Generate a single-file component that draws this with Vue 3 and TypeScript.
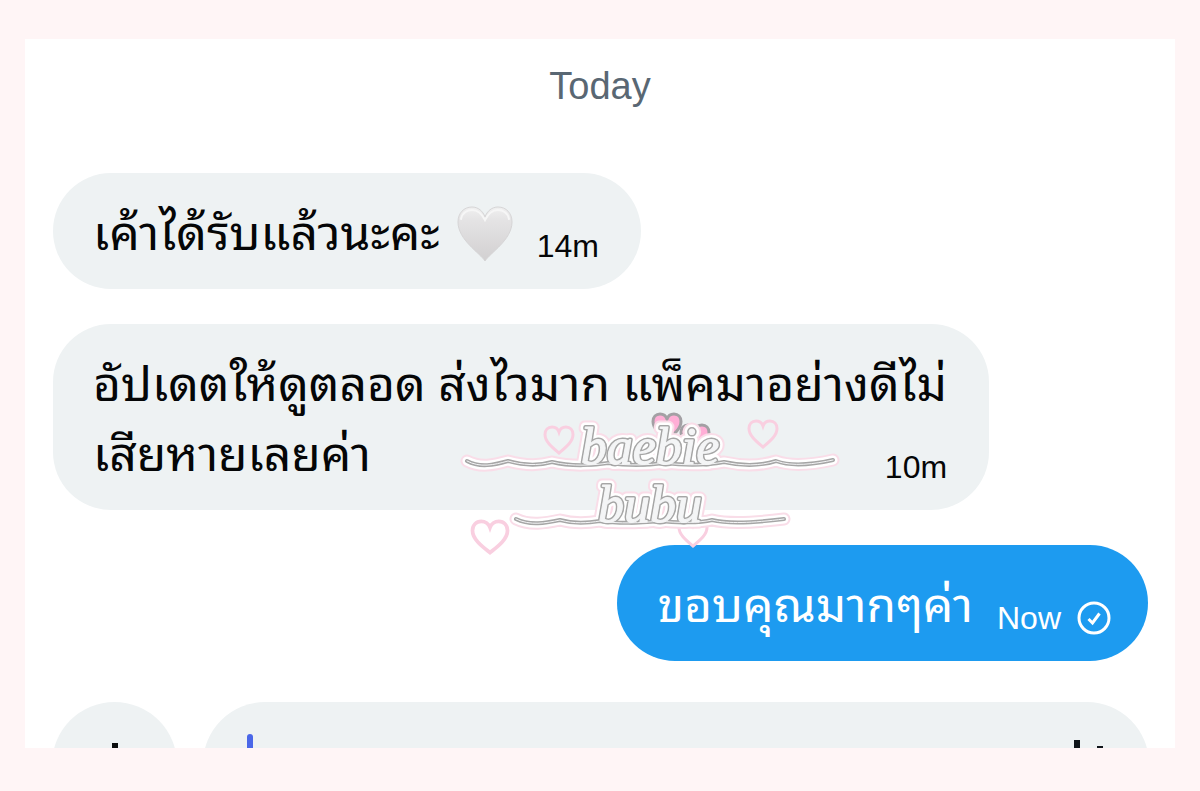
<script setup lang="ts">
interface Message {
  id: number
  side: 'in' | 'out'
  lines: string[]
  time: string
  heart?: boolean
}

const messages: Message[] = [
  { id: 1, side: 'in', lines: ['เค้าได้รับแล้วนะคะ'], time: '14m', heart: true },
  { id: 2, side: 'in', lines: ['อัปเดตให้ดูตลอด ส่งไวมาก แพ็คมาอย่างดีไม่', 'เสียหายเลยค่า'], time: '10m' },
  { id: 3, side: 'out', lines: ['ขอบคุณมากๆค่า'], time: 'Now' },
]

const heartPath = 'M16 28C10 23 2 17 2 9.500C2 5 5 2 9 2C12 2 15 4 16 7C17 4 20 2 23 2C27 2 30 5 30 9.500C30 17 22 23 16 28Z'
</script>

<template>
  <div class="page">
    <main class="card">
      <h1 class="day">Today</h1>

      <section class="thread">
        <article
          v-for="m in messages"
          :key="m.id"
          class="bubble"
          :class="[m.side, { tall: m.lines.length > 1 }]"
        >
          <p class="text">
            <span v-for="line in m.lines" :key="line" class="line">{{ line }}</span>
          </p>
          <svg v-if="m.heart" class="emoji" viewBox="0 0 56 56" role="img" aria-label="white heart">
            <defs>
              <linearGradient id="heartFill" x1="0" y1="0" x2="0" y2="1">
                <stop offset="0" stop-color="#f0f0f0" />
                <stop offset="0.25" stop-color="#e4e3e4" />
                <stop offset="1" stop-color="#d2d0d1" />
              </linearGradient>
            </defs>
            <path
              d="M28 55C23 47 1 34 1 16C1 7 7 1 15 1C21 1 26 5 28 11C30 5 35 1 41 1C49 1 55 7 55 16C55 34 33 47 28 55Z"
              fill="url(#heartFill)" stroke="#d6d5d6" stroke-width="1"
            />
            <path d="M4 13C5 7 10 4 15 4C21 4 25 8 28 14C31 8 35 4 41 4C46 4 51 7 52 13" fill="none" stroke="#f6f6f6" stroke-width="2" stroke-linecap="round" />
          </svg>
          <span class="meta">
            <time>{{ m.time }}</time>
            <svg v-if="m.side === 'out'" class="sent" viewBox="0 0 34 34" role="img" aria-label="sent">
              <circle cx="17" cy="17" r="15" fill="none" stroke="currentColor" stroke-width="3" />
              <path d="M11.500 18L15.500 22L22.500 12.500" fill="none" stroke="currentColor" stroke-width="3" />
            </svg>
          </span>
        </article>
      </section>

      <form class="composer" @submit.prevent>
        <button class="round" type="button" aria-label="Add attachment">
          <svg viewBox="0 0 44 44"><path d="M22 0V44M0 22H44" stroke="#0b0d0e" stroke-width="6" /></svg>
        </button>
        <div class="field">
          <i class="caret"></i>
          <input type="text" aria-label="Message" />
          <button class="voice" type="button" aria-label="Record voice message">
            <svg viewBox="0 0 56 50">
              <path d="M28 0V50M51 6V44M5 12V38" stroke="#0f1419" stroke-width="6" />
            </svg>
          </button>
        </div>
      </form>

      <svg class="mark" viewBox="455 405 390 155">
        <defs>
          <g id="script">
            <path class="swash" d="M467 461C480 468 494 465 508 461C522 465 538 466 552 462C572 467 596 465 608 463C630 466 650 465 664 463C690 466 708 465 724 462C742 466 760 466 776 461C792 467 815 464 833 460" />
            <path class="swash" d="M516 519C530 526 546 523 560 520C574 524 588 523 600 521C620 524 640 523 660 521C676 523 700 523 712 520C728 524 752 523 784 519" />
            <text x="650" y="464" text-anchor="middle">baebie</text>
            <text x="650" y="522" text-anchor="middle">bubu</text>
          </g>
        </defs>
        <g class="outline">
          <path :d="heartPath" transform="translate(543 425)" />
          <path :d="heartPath" transform="translate(747 419)" />
          <path :d="heartPath" transform="translate(470 519) scale(1.25 1.200)" />
          <path :d="heartPath" transform="translate(677 518)" />
        </g>
        <g class="solid">
          <path :d="heartPath" transform="translate(651 412)" />
          <path :d="heartPath" transform="translate(679 423)" />
        </g>
        <use href="#script" class="glow" />
        <use href="#script" class="halo" />
        <use href="#script" class="edge" />
        <use href="#script" class="core" />
      </svg>
    </main>
  </div>
</template>

<style>
body {
  margin: 0;
}
</style>

<style scoped>
.page {
  box-sizing: border-box;
  height: 100vh;
  padding: 39px 25px 43px;
  display: flex;
  background: #fff5f6;
  font-family: "Liberation Sans", Arial, sans-serif;
}
.card {
  position: relative;
  flex: 1;
  min-width: 0;
  overflow: hidden;
  background: #fff;
  display: flex;
  flex-direction: column;
}
.day {
  margin: 0;
  padding: 23px 0 63px;
  font-size: 38px;
  line-height: 48px;
  font-weight: 400;
  text-align: center;
  color: #596773;
}
.thread {
  display: flex;
  flex-direction: column;
  align-items: flex-start;
  gap: 35px;
  padding: 0 27px 0 28px;
}
.bubble {
  box-sizing: border-box;
  display: flex;
  padding: 21px 42px 25px 40px;
  border-radius: 58px;
  background: #eef2f3;
  color: #050607;
}
.bubble.tall {
  display: grid;
}
.bubble.out {
  align-self: flex-end;
  padding-right: 37px;
  background: #1d9bf0;
  color: #fff;
}
.text {
  margin: 0;
  font-family: "Noto Sans Thai Looped", "Noto Looped Thai", Loma, Garuda, Waree, "Liberation Sans", sans-serif;
  font-size: 48px;
  line-height: 70px;
  white-space: nowrap;
}
.line {
  display: block;
}
.emoji {
  width: 56px;
  height: 56px;
  margin: 12px 0 0 17px;
}
.meta {
  align-self: flex-end;
  display: flex;
  align-items: center;
  gap: 16px;
  margin-left: 24px;
  font-size: 32px;
  line-height: 36px;
}
.tall .meta {
  grid-area: 1 / 1;
  justify-self: end;
}
.tall .text {
  grid-area: 1 / 1;
}
.sent {
  width: 34px;
  height: 34px;
}
.composer {
  display: flex;
  align-items: flex-start;
  gap: 26px;
  padding: 41px 26px 0 27px;
}
.round {
  flex: none;
  width: 125px;
  height: 125px;
  border: 0;
  border-radius: 50%;
  padding: 0;
  display: grid;
  place-items: center;
  background: #eef2f3;
}
.round svg {
  width: 44px;
  height: 44px;
}
.field {
  flex: 1;
  min-width: 0;
  box-sizing: border-box;
  height: 125px;
  border-radius: 62px;
  padding: 0 44px;
  display: flex;
  align-items: center;
  background: #eef2f3;
}
.caret {
  width: 6px;
  height: 62px;
  border-radius: 3px;
  background: #4a67e8;
}
.field input {
  flex: 1;
  min-width: 0;
  border: 0;
  outline: 0;
  background: transparent;
  font: inherit;
  font-size: 48px;
}
.voice {
  border: 0;
  padding: 0;
  background: transparent;
}
.voice svg {
  display: block;
  width: 56px;
  height: 50px;
}
.mark {
  position: absolute;
  top: 366px;
  left: calc(50% - 145px);
  width: 390px;
  height: 155px;
  pointer-events: none;
  font-family: "Liberation Serif", serif;
  font-style: italic;
  font-size: 52px;
}
.outline {
  fill: none;
  stroke: #f9cfe0;
  stroke-width: 3;
}
.solid {
  fill: #ffaed6;
  stroke: #a3a0a4;
  stroke-width: 3;
}
.swash {
  fill: none;
}
.glow,
.halo,
.edge,
.core {
  stroke-linecap: round;
  stroke-linejoin: round;
}
.glow {
  fill: #f9dde8;
  stroke: #f9dde8;
  stroke-width: 13;
}
.halo {
  fill: #fff;
  stroke: #fff;
  stroke-width: 9;
}
.edge {
  fill: #a6a6a6;
  stroke: #a6a6a6;
  stroke-width: 4;
}
.core {
  fill: #f4f5f6;
  stroke: #f4f5f6;
  stroke-width: 1;
}
</style>
